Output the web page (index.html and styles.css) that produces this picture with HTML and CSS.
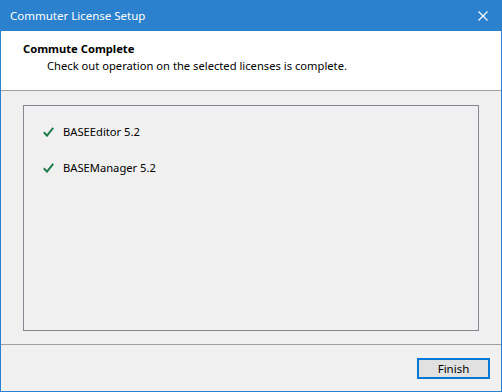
FILE: index.html
```html
<!DOCTYPE html>
<html lang="en">
<head>
  <meta charset="UTF-8">
  <title>Commuter License Setup</title>
  <link rel="stylesheet" href="styles.css">
</head>
<body>
  <div class="window">
    <!-- Title bar -->
    <div class="titlebar">
      <span class="titlebar-text">Commuter License Setup</span>
      <span class="titlebar-close">
        <svg width="10" height="10" viewBox="0 0 10 10">
          <path d="M0.5 0.5 L9.5 9.5 M9.5 0.5 L0.5 9.5" stroke="#ffffff" stroke-width="1.1" fill="none"/>
        </svg>
      </span>
    </div>

    <!-- Header -->
    <div class="header">
      <div class="header-title">Commute Complete</div>
      <div class="header-subtitle">Check out operation on the selected licenses is complete.</div>
    </div>

    <!-- Result list -->
    <div class="content">
      <div class="result-box">
        <div class="result-row">
          <svg class="check" width="11" height="10" viewBox="0 0 11 10">
            <path d="M0.8 5.2 L4 8.6 L10.2 0.8" stroke="#1e7a4c" stroke-width="2" fill="none"/>
          </svg>
          <span>BASEEditor 5.2</span>
        </div>
        <div class="result-row">
          <svg class="check" width="11" height="10" viewBox="0 0 11 10">
            <path d="M0.8 5.2 L4 8.6 L10.2 0.8" stroke="#1e7a4c" stroke-width="2" fill="none"/>
          </svg>
          <span>BASEManager 5.2</span>
        </div>
      </div>
    </div>

    <!-- Footer -->
    <div class="footer">
      <button class="btn-finish">Finish</button>
    </div>
  </div>
</body>
</html>
```

FILE: styles.css
```css
*,
*::before,
*::after {
  box-sizing: border-box;
}

:root {
  --accent-color: #2b81cd;
  --focus-color: #0078d7;
  --face-color: #f0f0f0;
  --line-color: #a0a0a0;
  --text-primary: #000000;
}

body {
  margin: 0;
  font-family: "Noto Sans", "Liberation Sans", sans-serif;
  font-size: 11.2px;
  color: var(--text-primary);
  background: #ffffff;
}

.window {
  width: 502px;
  height: 392px;
  display: flex;
  flex-direction: column;
  background: var(--face-color);
  border: 1px solid var(--accent-color);
  border-top: none;
}

.titlebar {
  height: 31px;
  margin: 0 -1px;
  display: flex;
  align-items: center;
  justify-content: space-between;
  background: var(--accent-color);
  color: #ffffff;
  padding: 0 10px;
}

.titlebar-text {
  font-size: 11.5px;
  padding-bottom: 1px;
}

.titlebar-close {
  display: flex;
  width: 10px;
  height: 10px;
  margin-right: 4px;
}

.header {
  height: 60px;
  background: #ffffff;
  border-bottom: 1px solid var(--line-color);
  padding: 10px 0 0 22px;
}

.header-title {
  font-weight: bold;
  line-height: 16px;
}

.header-subtitle {
  padding-left: 24px;
  line-height: 17px;
}

.content {
  padding: 14px 22px 13px;
  border-bottom: 1px solid var(--line-color);
}

.result-box {
  height: 226px;
  border: 1px solid #828790;
  padding: 18px 19px;
  display: flex;
  flex-direction: column;
  gap: 20px;
}

.result-row {
  display: flex;
  align-items: center;
  gap: 9px;
  line-height: 16px;
}

.check {
  flex-shrink: 0;
}

.footer {
  flex: 1;
  display: flex;
  justify-content: flex-end;
  align-items: flex-start;
  padding: 13px 11px 0 0;
}

.btn-finish {
  width: 73px;
  height: 21px;
  background: #e1e1e1;
  border: 2px solid var(--focus-color);
  font-family: inherit;
  font-size: 11.5px;
  color: var(--text-primary);
  padding: 0;
}
```
